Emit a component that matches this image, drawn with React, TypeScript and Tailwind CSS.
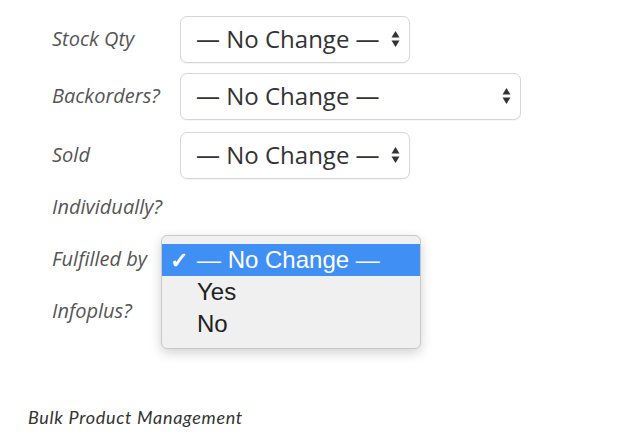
import React from "react"

// Small up/down arrows used by the native-looking selects
function UpDown() {
  return (
    <svg width="9" height="18" viewBox="0 0 9 18" className="shrink-0">
      <path d="M4.5 1 L8.5 7.5 H0.5 Z" fill="#333" />
      <path d="M4.5 17 L8.5 10.5 H0.5 Z" fill="#333" />
    </svg>
  )
}

function Select({ width, hidden }: { width: string; hidden?: boolean }) {
  return (
    <div
      className={`${width} h-[47px] my-[2.5px] flex items-center justify-between pl-[15px] pr-[9px] bg-white border border-[#d6d6d6] rounded-[7px] shadow-[0_1px_1px_rgba(0,0,0,0.04)]`}
    >
      <span className={`text-[24px] text-[#333] font-['Open_Sans',sans-serif] leading-none ${hidden ? "invisible" : ""}`}>
        — No Change —
      </span>
      <UpDown />
    </div>
  )
}

export default function App() {
  const label = "w-[128px] shrink-0 leading-[52px] text-[20px] italic text-[#555] font-['Open_Sans',sans-serif]"

  return (
    <div className="w-[617px] h-[446px] bg-white overflow-hidden relative">
      <div className="pl-[52px] pt-[13px] flex flex-col">
        <div className="flex items-start">
          <div className={label}>Stock Qty</div>
          <Select width="w-[230px]" />
        </div>

        <div className="flex items-start mt-[5px]">
          <div className={label}>Backorders?</div>
          <Select width="w-[341px]" />
        </div>

        <div className="flex items-start mt-[7px]">
          <div className={label}>
            Sold
            <br />
            Individually?
          </div>
          <Select width="w-[230px]" />
        </div>

        <div className="flex items-start relative">
          <div className={label}>
            Fulfilled by
            <br />
            Infoplus?
          </div>
          {/* the select itself sits under the open menu */}
          <Select width="w-[230px]" hidden />

          {/* open dropdown menu */}
          <div className="absolute left-[109px] top-[2px] w-[260px] py-[8px] bg-[#f0f0f0] border border-[#c8c8c8] rounded-[6px] shadow-[0_4px_12px_rgba(0,0,0,0.18)] font-['Liberation_Sans',Arial,sans-serif] text-[24px]">
            <div className="h-[32px] flex items-center bg-[#3f8ff5] text-white">
              <span className="w-[35px] pl-[8px] text-[22px] font-bold">✓</span>
              <span>— No Change —</span>
            </div>
            <div className="h-[32px] flex items-center pl-[35px] text-[#222]">Yes</div>
            <div className="h-[32px] flex items-center pl-[35px] text-[#222]">No</div>
          </div>
        </div>
      </div>

      <div className="absolute left-[28px] top-[404px] text-[18px] tracking-[0.7px] italic text-[#333] font-['Lato',sans-serif]">
        Bulk Product Management
      </div>
    </div>
  )
}
